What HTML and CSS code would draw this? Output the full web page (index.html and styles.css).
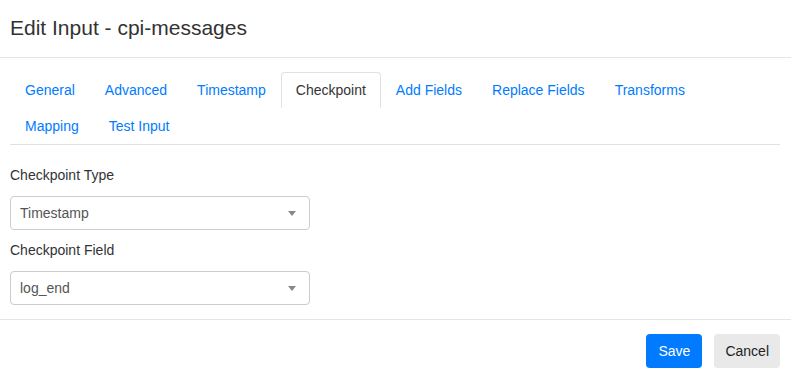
FILE: index.html
```html
<!DOCTYPE html>
<html>
<head>
<meta charset="utf-8">
<link rel="stylesheet" href="styles.css">
</head>
<body>
<div class="modal">
  <div class="modal-header">
    <h4 class="modal-title">Edit Input - cpi-messages</h4>
  </div>
  <div class="modal-body">
    <ul class="nav-tabs">
      <li class="tab">General</li>
      <li class="tab">Advanced</li>
      <li class="tab">Timestamp</li>
      <li class="tab active">Checkpoint</li>
      <li class="tab">Add Fields</li>
      <li class="tab">Replace Fields</li>
      <li class="tab">Transforms</li>
      <li class="tab">Mapping</li>
      <li class="tab">Test Input</li>
    </ul>
    <div class="tab-content">
      <div class="form-group">
        <label class="label">Checkpoint Type</label>
        <div class="select"><span>Timestamp</span><span class="caret"></span></div>
      </div>
      <div class="form-group">
        <label class="label">Checkpoint Field</label>
        <div class="select"><span>log_end</span><span class="caret"></span></div>
      </div>
    </div>
  </div>
  <div class="modal-footer">
    <button class="btn btn-primary">Save</button>
    <button class="btn btn-secondary">Cancel</button>
  </div>
</div>
</body>
</html>
```
FILE: styles.css
```css
* { box-sizing: border-box; }
body {
  margin: 0;
  background: #fff;
  font-family: "Liberation Sans", Arial, sans-serif;
  color: #333;
}
.modal { width: 791px; }
.modal-header {
  height: 58px;
  padding: 16px 10px 0;
  border-bottom: 1px solid #e5e5e5;
}
.modal-title {
  margin: 0;
  font-size: 21px;
  font-weight: normal;
  line-height: 24px;
  color: #333;
}
.modal-body {
  padding: 14px 11px 14px 10px;
}
.nav-tabs {
  list-style: none;
  margin: 0;
  padding: 0;
  display: flex;
  flex-wrap: wrap;
  border-bottom: 1px solid #dee2e6;
}
.tab {
  font-size: 14px;
  line-height: 16px;
  padding: 9px 14px;
  border: 1px solid transparent;
  border-top-left-radius: 4px;
  border-top-right-radius: 4px;
  color: #007bff;
}
.tab.active {
  color: #333;
  border-color: #dee2e6 #dee2e6 transparent;
  background: #fff;
}
.tab-content { padding-top: 20px; }
.form-group { margin-bottom: 10px; }
.form-group:last-child { margin-bottom: 0; }
.label {
  display: block;
  font-size: 14px;
  line-height: 20px;
  margin-bottom: 11px;
  color: #333;
}
.select {
  width: 300px;
  height: 34px;
  border: 1px solid #ccc;
  border-radius: 4px;
  padding: 0 13px 0 9px;
  display: flex;
  align-items: center;
  justify-content: space-between;
  font-size: 14px;
  color: #555;
}
.caret {
  width: 0;
  height: 0;
  border-left: 4px solid transparent;
  border-right: 4px solid transparent;
  border-top: 5px solid #888;
}
.modal-footer {
  border-top: 1px solid #e5e5e5;
  padding: 14px 11px 11px 10px;
  display: flex;
  justify-content: flex-end;
  gap: 12px;
}
.btn {
  font-family: "Liberation Sans", Arial, sans-serif;
  font-size: 14px;
  height: 34px;
  padding: 0 12px;
  border: none;
  border-radius: 4px;
}
.btn-primary { background: #007bff; color: #fff; }
.btn-secondary { background: #e9e9e9; color: #222; padding: 0 11px; }
```
